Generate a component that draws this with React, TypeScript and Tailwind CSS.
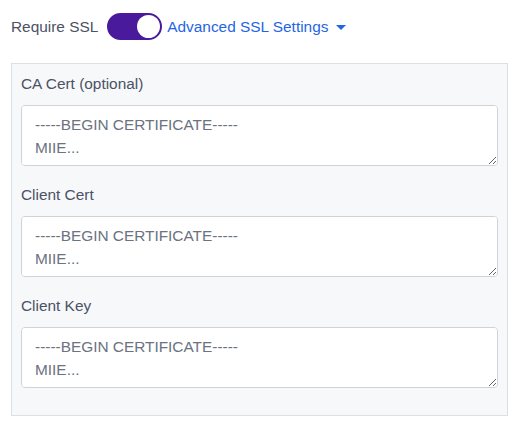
import { useState } from 'react';

const CERT_FIELDS = ['CA Cert (optional)', 'Client Cert', 'Client Key'];

const PLACEHOLDER = '-----BEGIN CERTIFICATE-----\nMIIE...';

export default function App() {
  const [ssl, setSsl] = useState(true);

  return (
    <div
      className="w-[517px] h-[428px] bg-white px-[11px] pt-[13px]"
      style={{ fontFamily: '"Liberation Sans", Arial, sans-serif' }}
    >
      {/* Top row */}
      <div className="flex items-center h-[27px]">
        <span className="text-[15.4px] text-[#4b5265]">Require SSL</span>
        <button
          type="button"
          onClick={() => setSsl(!ssl)}
          className="ml-[9px] w-[55px] h-[27px] rounded-full bg-[#4a1a9c] border-2 border-[#4a1a9c] flex items-center p-0"
        >
          <span
            className={`block w-[23px] h-[23px] rounded-full bg-white transition-transform ${
              ssl ? 'translate-x-[28px]' : 'translate-x-0'
            }`}
          />
        </button>
        <button type="button" className="ml-[5px] flex items-center text-[15.4px] text-[#1f66e5]">
          Advanced SSL Settings
          <svg width="10" height="6" viewBox="0 0 10 6" className="ml-[8px] mt-[3px]">
            <path d="M0 0 L10 0 L5 5 Z" fill="#1f66e5" />
          </svg>
        </button>
      </div>

      {/* Advanced panel */}
      <div className="mt-[23px] w-[497px] border border-[#dcdfe4] bg-[#f7f8fa] px-[9px] pt-[9px] pb-[9px]">
        {CERT_FIELDS.map((label) => (
          <div key={label} className="mb-[18px]">
            <label className="block text-[15.4px] leading-[22px] text-[#4b5265] mb-[10px]">{label}</label>
            <textarea
              placeholder={PLACEHOLDER}
              className="block w-[477px] h-[61px] rounded-[4px] border border-[#cfd3d9] bg-white px-[13px] py-[7px] text-[15.4px] leading-[23px] text-[#374151] placeholder:text-[#6b7280] outline-none"
            />
          </div>
        ))}
      </div>
    </div>
  );
}
